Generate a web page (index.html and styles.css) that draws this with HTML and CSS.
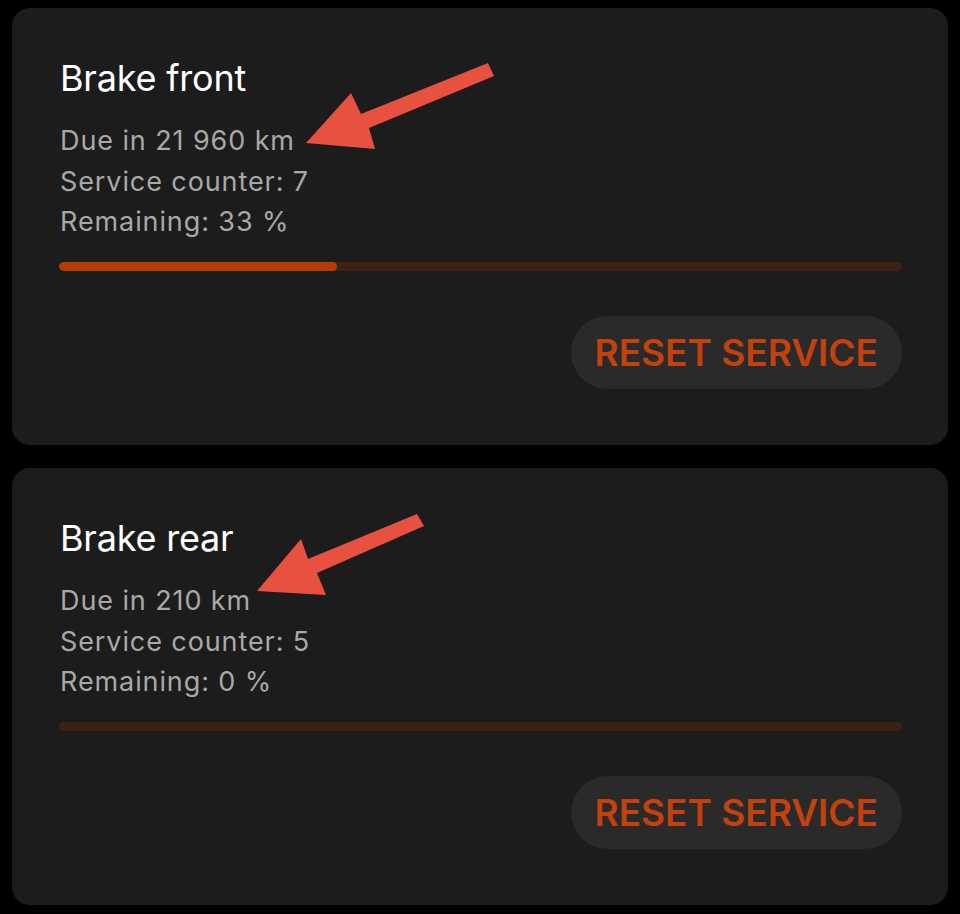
FILE: index.html
```html
<!DOCTYPE html>
<html lang="en">
<head>
<meta charset="utf-8">
<title>Service</title>
<link rel="stylesheet" href="styles.css">
</head>
<body>
<main class="list">
  <section class="card">
    <h2 class="title">Brake front</h2>
    <p class="line">Due in 21 960 km</p>
    <p class="line">Service counter: 7</p>
    <p class="line">Remaining: 33 %</p>
    <div class="track"><div class="fill" style="width:33%"></div></div>
    <div class="actions"><button class="reset">RESET SERVICE</button></div>
    <svg class="arrow arrow-front" width="960" height="460" viewBox="0 0 960 460" aria-hidden="true">
      <polygon points="306,143 351,93 361,114 488,63 494,76 369,128 375,149" />
    </svg>
  </section>
  <section class="card">
    <h2 class="title">Brake rear</h2>
    <p class="line">Due in 210 km</p>
    <p class="line">Service counter: 5</p>
    <p class="line">Remaining: 0 %</p>
    <div class="track"><div class="fill" style="width:0%"></div></div>
    <div class="actions"><button class="reset">RESET SERVICE</button></div>
    <svg class="arrow arrow-rear" width="960" height="460" viewBox="0 459 960 460" aria-hidden="true">
      <polygon points="257,590 301,538 308,558 417,513 424,525 317,572 326,594" />
    </svg>
  </section>
</main>
</body>
</html>
```
FILE: styles.css
```css
html, body {
  margin: 0;
  padding: 0;
  background: #000;
}
body {
  font-family: Inter, "Noto Sans", "Liberation Sans", sans-serif;
  width: 960px;
  height: 914px;
  overflow: hidden;
}
.list {
  display: flex;
  flex-direction: column;
  gap: 23px;
  padding: 8px 12px 0 12px;
}
.card {
  position: relative;
  background: #1c1c1c;
  border-radius: 18px;
  height: 437px;
  box-sizing: border-box;
  padding: 48px 46px 0 47px;
  display: flex;
  flex-direction: column;
}
.title {
  margin: 0 0 0 1px;
  font-size: 36px;
  font-weight: 400;
  line-height: 44px;
  color: #ffffff;
  letter-spacing: -0.2px;
}
.title + .line { margin-top: 21px; }
.line {
  margin: 0 0 0 1px;
  font-size: 27px;
  line-height: 40.5px;
  color: #a8a8a8;
  letter-spacing: 0.9px;
}
.track {
  margin-top: 19px;
  height: 9px;
  border-radius: 5px;
  background: #3b2116;
  overflow: hidden;
}
.fill {
  height: 100%;
  border-radius: 5px;
  background: #b73c00;
}
.actions {
  display: flex;
  justify-content: flex-end;
  margin-top: 45px;
}
.reset {
  height: 73px;
  padding: 0 24px;
  border: none;
  border-radius: 37px;
  background: #2a2a2a;
  color: #c2410c;
  font-family: inherit;
  font-size: 37px;
  font-weight: 600;
  letter-spacing: 0;
}
.arrow {
  position: absolute;
  left: -12px;
  top: -8px;
  pointer-events: none;
}
.arrow-rear { top: -8px; }
.arrow polygon { fill: #e8503f; }
```
